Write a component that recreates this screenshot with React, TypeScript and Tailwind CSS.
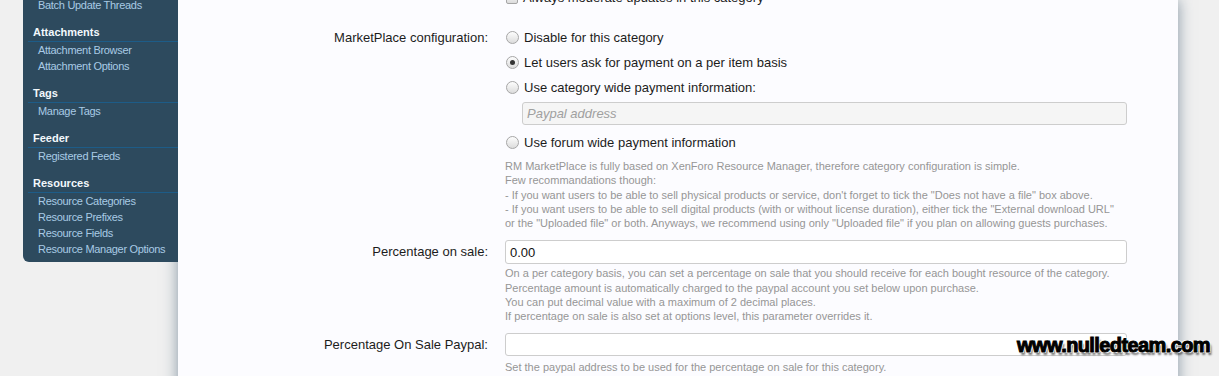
import React from 'react';

interface NavSection {
  title?: string;
  links: string[];
}

const sections: NavSection[] = [
  { links: ['Batch Update Threads'] },
  { title: 'Attachments', links: ['Attachment Browser', 'Attachment Options'] },
  { title: 'Tags', links: ['Manage Tags'] },
  { title: 'Feeder', links: ['Registered Feeds'] },
  {
    title: 'Resources',
    links: ['Resource Categories', 'Resource Prefixes', 'Resource Fields', 'Resource Manager Options'],
  },
];

function Sidebar() {
  return (
    <div className="relative z-10 ml-[23px] w-[155px] shrink-0 self-start bg-[#2d4a5e] rounded-bl-[6px] -mt-[3px] pb-[5px]">
      {sections.map((s, i) => (
        <div key={i} className={i < sections.length - 1 ? 'pb-[10px]' : ''}>
          {s.title && (
            <div className="ml-[5px] h-[19px] border-b border-[#1d5c88] pl-[5px] text-[11px] font-bold leading-[18px] text-[#f2f8fc]">
              {s.title}
            </div>
          )}
          <ul>
            {s.links.map((l) => (
              <li key={l} className="pl-[15px] text-[11px] leading-[16px] tracking-[-0.3px] text-[#a9cae5]">
                {l}
              </li>
            ))}
          </ul>
        </div>
      ))}
    </div>
  );
}

function Radio({ checked = false }: { checked?: boolean }) {
  return (
    <span className="flex h-[13px] w-[13px] shrink-0 items-center justify-center rounded-full border border-[#a6a6a6] bg-gradient-to-b from-[#fdfdfd] to-[#dcdcdc]">
      {checked && <span className="h-[5px] w-[5px] rounded-full bg-[#333]" />}
    </span>
  );
}

function RadioRow({ label, checked }: { label: string; checked?: boolean }) {
  return (
    <div className="flex h-[25px] items-center gap-[5px] pl-[1px] text-[13px] text-[#1c1c1c]">
      <Radio checked={checked} />
      <span>{label}</span>
    </div>
  );
}

function Explain({ lines }: { lines: string[] }) {
  return (
    <div className="text-[11px] leading-[14.25px] text-[#969696] whitespace-nowrap">
      {lines.map((l, i) => (
        <div key={i}>{l}</div>
      ))}
    </div>
  );
}

function Row({ label, labelH, children, className = '' }: { label: string; labelH: string; children: React.ReactNode; className?: string }) {
  return (
    <div className={`flex ${className}`}>
      <div className={`w-[327px] shrink-0 pr-[17px] text-right text-[13px] text-[#1c1c1c] ${labelH}`}>{label}</div>
      <div className="flex-1 pr-[51px]">{children}</div>
    </div>
  );
}

export default function App() {
  return (
    <div className="relative h-[376px] w-[1219px] overflow-hidden bg-[#f0f0f0] font-['Liberation_Sans',Arial,sans-serif]">
      <div className="flex h-full">
        <Sidebar />
        <div className="h-[600px] w-[1000px] shrink-0 bg-[#fcfcff] shadow-[0_0_14px_rgba(45,75,100,0.55)]">
          <div className="-mt-[11px] flex h-[18px]">
            <div className="w-[327px]" />
            <div className="flex items-center gap-[5px] pl-[1px] text-[13px] text-[#1c1c1c]">
              <span className="h-[12px] w-[12px] rounded-[2px] border border-[#a6a6a6] bg-gradient-to-b from-[#fdfdfd] to-[#dcdcdc]" />
              <span>Always moderate updates in this category</span>
            </div>
          </div>

          <Row label="MarketPlace configuration:" labelH="leading-[25px]" className="mt-[18px]">
            <RadioRow label="Disable for this category" />
            <RadioRow label="Let users ask for payment on a per item basis" checked />
            <RadioRow label="Use category wide payment information:" />
            <div className="ml-[17px] mt-[2px] flex h-[23px] items-center rounded-[3px] border border-[#cdcdcd] bg-[#f5f5f5] px-[4px] text-[13px] italic text-[#a0a0a0]">
              Paypal address
            </div>
            <div className="mt-[5px]">
              <RadioRow label="Use forum wide payment information" />
            </div>
            <div className="mt-[4px]">
              <Explain
                lines={[
                  'RM MarketPlace is fully based on XenForo Resource Manager, therefore category configuration is simple.',
                  'Few recommandations though:',
                  '- If you want users to be able to sell physical products or service, don\'t forget to tick the "Does not have a file" box above.',
                  '- If you want users to be able to sell digital products (with or without license duration), either tick the "External download URL"',
                  'or the "Uploaded file" or both. Anyways, we recommend using only "Uploaded file" if you plan on allowing guests purchases.',
                ]}
              />
            </div>
          </Row>

          <Row label="Percentage on sale:" labelH="leading-[24px]" className="mt-[10px]">
            <div className="flex h-[24px] items-center rounded-[3px] border border-[#cdcdcd] bg-white px-[4px] text-[13px] text-[#111]">
              0.00
            </div>
            <div className="mt-[2px]">
              <Explain
                lines={[
                  'On a per category basis, you can set a percentage on sale that you should receive for each bought resource of the category.',
                  'Percentage amount is automatically charged to the paypal account you set below upon purchase.',
                  'You can put decimal value with a maximum of 2 decimal places.',
                  'If percentage on sale is also set at options level, this parameter overrides it.',
                ]}
              />
            </div>
          </Row>

          <Row label="Percentage On Sale Paypal:" labelH="leading-[23px]" className="mt-[10px]">
            <div className="h-[23px] rounded-[3px] border border-[#cdcdcd] bg-white" />
            <div className="mt-[4px]">
              <Explain lines={['Set the paypal address to be used for the percentage on sale for this category.']} />
            </div>
          </Row>
        </div>
      </div>

      <div className="absolute right-[9px] top-[330px] text-[20px] font-bold tracking-[-0.6px] text-black [-webkit-text-stroke:1px_black] [text-shadow:-1px_-1px_0_#fff,1px_-1px_0_#fff,-1px_1px_0_#fff,1px_1px_0_#fff,2px_3px_2px_rgba(0,0,0,0.55)]">
        www.nulledteam.com
      </div>
    </div>
  );
}
